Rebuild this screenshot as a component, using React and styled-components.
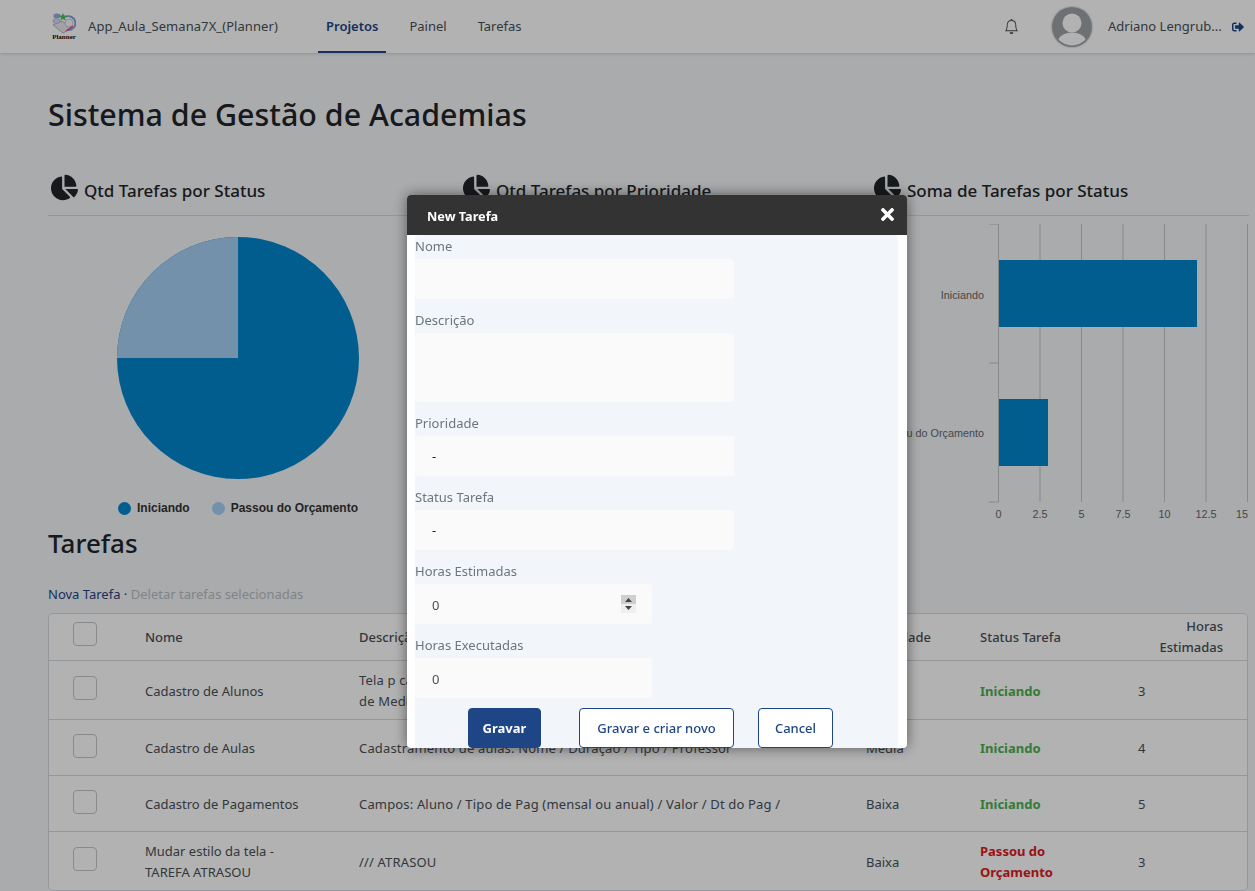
import React from 'react'
import styled, { createGlobalStyle } from 'styled-components'
import { FaChartPie, FaSignOutAlt, FaTimes } from 'react-icons/fa'
import { BsBell } from 'react-icons/bs'

const colors = {
  navy: '#1e4585',
  text: '#495057',
  dark: '#212529',
  line: '#d5d9df',
  pie: '#0086cc',
  pieLight: '#a6d0f5',
  grid: '#c4c4c4',
  chartText: '#666666'
}

const GlobalStyle = createGlobalStyle`
  html, body {
    margin: 0;
    height: 891px;
    overflow: hidden;
    background: #f3f5f8;
    font-family: "Noto Sans", "Liberation Sans", sans-serif;
    font-size: 13px;
    line-height: 21px;
    color: ${colors.text};
  }
  * { box-sizing: border-box; }
`

const Header = styled.header`
  height: 53px;
  background: #fff;
  box-shadow: 0 1px 3px rgba(0, 0, 0, 0.15);
  display: flex;
  align-items: center;
  padding: 0 11px 0 52px;
`

const Logo = styled.div`
  width: 24px;
  display: flex;
  flex-direction: column;
  align-items: center;
`

const LogoCaption = styled.span`
  font-family: "Liberation Serif", serif;
  font-size: 7px;
  font-weight: 700;
  line-height: 7px;
  color: #111;
`

const Brand = styled.div`
  margin-left: 12px;
  width: 230px;
  white-space: nowrap;
  letter-spacing: 0.07px;
`

const Tabs = styled.nav`
  display: flex;
  height: 100%;
  gap: 15px;
`

const Tab = styled.a`
  padding: 2px 8px 0;
  display: flex;
  align-items: center;
  height: 100%;
  font-weight: ${p => (p.$active ? 600 : 400)};
  color: ${p => (p.$active ? colors.navy : colors.text)};
  border-bottom: 2px solid ${p => (p.$active ? colors.navy : 'transparent')};
`

const UserArea = styled.div`
  margin-left: auto;
  display: flex;
  align-items: center;
  color: ${colors.text};
`

const AvatarCircle = styled.div`
  margin-left: 33px;
  width: 40px;
  height: 40px;
  border-radius: 50%;
  overflow: hidden;
  box-shadow: 0 0 2px rgba(0, 0, 0, 0.4);
`

const UserName = styled.div`
  margin-left: 16px;
  width: 113px;
  white-space: nowrap;
`

const Logout = styled.span`
  margin-left: 11px;
  display: flex;
  color: ${colors.navy};
`

const Page = styled.main`
  padding: 0 7px 0 48px;
`

const Title = styled.h1`
  margin: 41px 0 36px;
  font-size: 30.4px;
  line-height: 42px;
  font-weight: 500;
  color: ${colors.dark};
`

const Charts = styled.section`
  display: grid;
  grid-template-columns: 412px 411px 1fr;
  height: 352px;
`

const ChartHead = styled.div`
  height: 44px;
  display: flex;
  align-items: center;
  border-bottom: 1px solid ${colors.line};
  padding: 0 0 6px 3px;
  gap: 6px;
  font-size: 17px;
  font-weight: 500;
  color: ${colors.dark};
`

const ChartIcon = styled(FaChartPie)`
  margin-top: -6px;
  color: ${colors.dark};
`

const PieArea = styled.div`
  width: 242px;
  margin: 21px 0 0 69px;
`

const Legend = styled.div`
  display: flex;
  gap: 22px;
  margin-top: 14px;
  justify-content: center;
  font-family: "Liberation Sans", sans-serif;
  font-size: 12px;
  line-height: 18px;
  font-weight: 700;
  white-space: nowrap;
  color: #333;
`

const LegendItem = styled.span`
  display: flex;
  align-items: center;
  gap: 6px;
`

const Dot = styled.i`
  width: 13px;
  height: 13px;
  border-radius: 50%;
  background: ${p => p.$color};
`

const SectionTitle = styled.h2`
  margin: 0 0 22px;
  font-size: 26px;
  line-height: 38px;
  font-weight: 500;
  color: ${colors.dark};
`

const Links = styled.div`
  margin-bottom: 8px;
  color: ${colors.navy};
`

const Disabled = styled.span`
  color: #b9bdc4;
`

const Table = styled.div`
  border: 1px solid ${colors.line};
  border-radius: 5px;
  background: #fff;
`

const Row = styled.div`
  display: grid;
  grid-template-columns: 72px 214px 507px 114px 158px 85px;
  padding: ${p => (p.$head ? '2px 24px' : '9px 24px 7px')};
  align-items: center;
  border-bottom: ${p => (p.$last ? 'none' : `1px solid ${colors.line}`)};
  color: ${colors.text};
  font-weight: ${p => (p.$head ? 500 : 400)};
  min-height: ${p => (p.$head ? '47px' : '56px')};
`

const Check = styled.span`
  display: block;
  width: 24px;
  height: 24px;
  margin-bottom: 6px;
  border: 1px solid #c3c6ca;
  border-radius: 4px;
  background: #fff;
`

const Cell = styled.div`
  padding-right: 40px;
`

const DescCell = styled(Cell)`
  letter-spacing: 0.16px;
`

const RightCell = styled.div`
  text-align: right;
`

const StatusText = styled(Cell)`
  font-weight: 700;
  color: ${p => (p.$late ? '#dc1a20' : '#4caf50')};
`

const Overlay = styled.div`
  position: fixed;
  inset: 0;
  background: rgba(0, 0, 0, 0.3);
`

const Modal = styled.div`
  position: fixed;
  top: 195px;
  left: 407px;
  width: 500px;
  height: 553px;
  background: #fff;
  border-radius: 4px;
  overflow: hidden;
  box-shadow: 0 0 14px rgba(0, 0, 0, 0.5);
`

const ModalHead = styled.div`
  height: 40px;
  background: #333;
  color: #fff;
  display: flex;
  align-items: center;
  justify-content: space-between;
  padding: 2px 10px 0 20px;
  font-size: 12.7px;
  font-weight: 700;
`

const CloseIcon = styled(FaTimes)`
  margin-top: -3px;
`

const ModalBody = styled.div`
  margin: 0 9px 0 8px;
  height: 513px;
  background: #f2f6fa;
  border-radius: 4px 4px 0 0;
`

const FieldLabel = styled.div`
  padding-top: 1px;
  margin-bottom: 2px;
  color: #6c757d;
`

const Field = styled.div`
  width: ${p => p.$width}px;
  height: ${p => p.$height || 40}px;
  margin-bottom: 10px;
  padding: 0 17px;
  background: #fafafa;
  border-radius: 4px;
  display: flex;
  align-items: center;
  justify-content: space-between;
  color: ${colors.dark};
`

const NumberField = styled(Field)`
  padding-top: 2px;
  color: ${colors.text};
`

const Spinner = styled.svg`
  margin: -2px -1px 0 0;
`

const Footer = styled.div`
  display: flex;
  padding-left: 53px;
  margin-top: 10px;
`

const Button = styled.button`
  width: ${p => p.$width}px;
  height: 40px;
  margin-right: ${p => p.$gap || 0}px;
  padding: 0;
  border: 1px solid ${colors.navy};
  border-radius: 4px;
  font: inherit;
  font-weight: ${p => (p.$primary ? 700 : 500)};
  background: ${p => (p.$primary ? colors.navy : '#fff')};
  color: ${p => (p.$primary ? '#fff' : colors.navy)};
`

const tasks = [
  { name: 'Cadastro de Alunos', desc: 'Tela p cadastro de Alunos: Nome / Dt Nasc / Fone / Email / Atestado de\u00a0Medico', prio: 'Alta', status: 'Iniciando', hours: 3 },
  { name: 'Cadastro de Aulas', desc: 'Cadastramento de aulas: Nome / Duração / Tipo / Professor', prio: 'Média', status: 'Iniciando', hours: 4 },
  { name: 'Cadastro de Pagamentos', desc: 'Campos: Aluno / Tipo de Pag (mensal ou anual) / Valor / Dt do Pag /', prio: 'Baixa', status: 'Iniciando', hours: 5 },
  { name: 'Mudar estilo da tela - TAREFA ATRASOU', desc: '/// ATRASOU', prio: 'Baixa', status: 'Passou do Orçamento', hours: 3, late: true }
]

const PlannerLogo = () => (
  <Logo>
    <svg width="24" height="21" viewBox="0 0 24 21">
      <path d="M1 12 L11 20 L20 15 L10 8 Z" fill="#e8e8ee" stroke="#9a9ab0" strokeWidth="0.7" />
      <ellipse cx="5" cy="3" rx="3.6" ry="2.4" fill="#98aedc" />
      <ellipse cx="4.5" cy="8" rx="3.6" ry="2.6" fill="#d2daee" stroke="#98aedc" strokeWidth="0.6" />
      <path d="M13 4 A7 7 0 1 1 15 17" fill="none" stroke="#7f9ad8" strokeWidth="1.8" />
      <circle cx="17" cy="10" r="4" fill="#f4f6ff" stroke="#a8a8c0" strokeWidth="0.6" />
      <path d="M11 0 L12.2 2.4 L15 2.8 L13 4.7 L13.5 7.4 L11 6.1 L8.5 7.4 L9 4.7 L7 2.8 L9.8 2.4 Z" fill="#4fbf5f" />
      <path d="M14 18 L21 13" stroke="#e0506a" strokeWidth="1.3" />
    </svg>
    <LogoCaption>Planner</LogoCaption>
  </Logo>
)

const UserPhoto = () => (
  <svg width="40" height="40" viewBox="0 0 40 40">
    <clipPath id="avatar-inner"><circle cx="20" cy="20" r="18.5" /></clipPath>
    <rect width="40" height="40" fill="#9da2a6" />
    <g clipPath="url(#avatar-inner)" fill="#fff">
      <circle cx="20" cy="16" r="9.5" />
      <ellipse cx="20" cy="36" rx="14.5" ry="10.5" />
    </g>
  </svg>
)

const Pie = () => (
  <svg width="242" height="242" viewBox="0 0 242 242">
    <circle cx="121" cy="121" r="121" fill={colors.pie} />
    <path d="M121 121 L0 121 A121 121 0 0 1 121 0 Z" fill={colors.pieLight} />
  </svg>
)

const barX = i => 127.5 + 41.5 * i
const ticks = ['0', '2.5', '5', '7.5', '10', '12.5', '15']

const BarChart = () => (
  <svg width="378" height="305" viewBox="0 0 378 305" style={{ display: 'block', marginTop: 8 }}>
    {ticks.map((t, i) => (
      <g key={t}>
        <line x1={barX(i)} x2={barX(i)} y1="0" y2="278" stroke={colors.grid} />
        <text x={i === 6 ? 371 : barX(i)} y="294" textAnchor="middle" fontFamily="Liberation Sans" fontSize="10.8" fill={colors.chartText}>{t}</text>
      </g>
    ))}
    <path d="M118 0 H127.5 M118 139 H127.5 M118 278 H127.5" stroke={colors.grid} />
    <rect x="128" y="36" width="198" height="67" fill={colors.pie} />
    <rect x="128" y="175" width="49" height="67" fill={colors.pie} />
    <text x="113" y="75" textAnchor="end" fontFamily="Liberation Sans" fontSize="10.8" fill={colors.chartText}>Iniciando</text>
    <text x="113" y="213" textAnchor="end" fontFamily="Liberation Sans" fontSize="10.8" fill={colors.chartText}>Passou do Orçamento</text>
  </svg>
)

const ChartTitle = ({ children }) => (
  <ChartHead>
    <ChartIcon size={27} />
    {children}
  </ChartHead>
)

const StepSpinner = () => (
  <Spinner width="15" height="18" viewBox="0 0 15 18">
    <rect width="15" height="9" fill="#cfcfcf" />
    <rect y="9" width="15" height="9" fill="#efefef" />
    <path d="M7.5 3 L11 7 H4 Z M4 11 H11 L7.5 15 Z" fill="#444" />
  </Spinner>
)

const App = () => (
  <>
    <GlobalStyle />
    <Header>
      <PlannerLogo />
      <Brand>App_Aula_Semana7X_(Planner)</Brand>
      <Tabs>
        <Tab $active>Projetos</Tab>
        <Tab>Painel</Tab>
        <Tab>Tarefas</Tab>
      </Tabs>
      <UserArea>
        <BsBell size={15} />
        <AvatarCircle><UserPhoto /></AvatarCircle>
        <UserName>Adriano Lengrub...</UserName>
        <Logout><FaSignOutAlt size={12} /></Logout>
      </UserArea>
    </Header>
    <Page>
      <Title>Sistema de Gestão de Academias</Title>
      <Charts>
        <div>
          <ChartTitle>Qtd Tarefas por Status</ChartTitle>
          <PieArea>
            <Pie />
            <Legend>
              <LegendItem><Dot $color={colors.pie} />Iniciando</LegendItem>
              <LegendItem><Dot $color={colors.pieLight} />Passou do Orçamento</LegendItem>
            </Legend>
          </PieArea>
        </div>
        <div>
          <ChartTitle>Qtd Tarefas por Prioridade</ChartTitle>
        </div>
        <div>
          <ChartTitle>Soma de Tarefas por Status</ChartTitle>
          <BarChart />
        </div>
      </Charts>
      <SectionTitle>Tarefas</SectionTitle>
      <Links>Nova Tarefa · <Disabled>Deletar tarefas selecionadas</Disabled></Links>
      <Table>
        <Row $head>
          <Check />
          <Cell>Nome</Cell>
          <Cell>Descrição</Cell>
          <div>Prioridade</div>
          <Cell>Status Tarefa</Cell>
          <RightCell>Horas Estimadas</RightCell>
        </Row>
        {tasks.map((t, i) => (
          <Row key={t.name} $last={i === tasks.length - 1}>
            <Check />
            <Cell>{t.name}</Cell>
            <DescCell>{t.desc}</DescCell>
            <div>{t.prio}</div>
            <StatusText $late={t.late}>{t.status}</StatusText>
            <div>{t.hours}</div>
          </Row>
        ))}
      </Table>
    </Page>
    <Overlay />
    <Modal>
      <ModalHead>
        New Tarefa
        <CloseIcon size={19} />
      </ModalHead>
      <ModalBody>
        <FieldLabel>Nome</FieldLabel>
        <Field $width={319} />
        <FieldLabel>Descrição</FieldLabel>
        <Field $width={319} $height={69} />
        <FieldLabel>Prioridade</FieldLabel>
        <Field $width={319}>-</Field>
        <FieldLabel>Status Tarefa</FieldLabel>
        <Field $width={319}>-</Field>
        <FieldLabel>Horas Estimadas</FieldLabel>
        <NumberField $width={237}>0<StepSpinner /></NumberField>
        <FieldLabel>Horas Executadas</FieldLabel>
        <NumberField $width={237}>0</NumberField>
        <Footer>
          <Button $primary $width={73} $gap={38}>Gravar</Button>
          <Button $width={155} $gap={24}>Gravar e criar novo</Button>
          <Button $width={75}>Cancel</Button>
        </Footer>
      </ModalBody>
    </Modal>
  </>
)

export default App
